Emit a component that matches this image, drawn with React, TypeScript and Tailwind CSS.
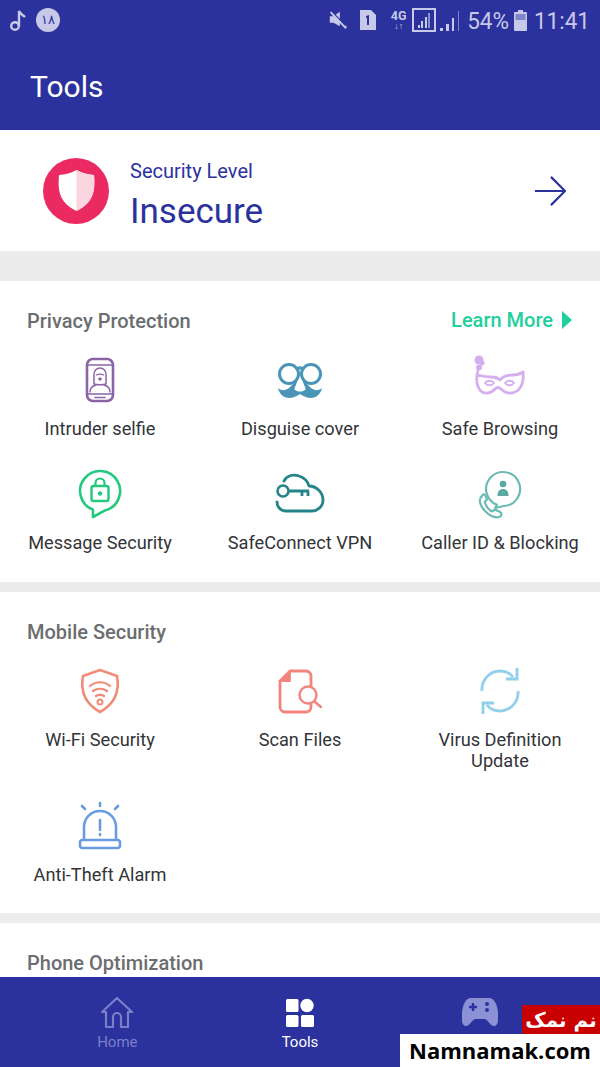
import React from "react";

function Svg({ children, color }: { children: React.ReactNode; color: string }) {
  return (
    <svg width="60" height="50" viewBox="0 0 60 50" fill="none" stroke={color} strokeWidth="2.4" strokeLinecap="round" strokeLinejoin="round">
      {children}
    </svg>
  );
}

const IntruderIcon = () => (
  <Svg color="#8a63a8">
    <rect x="17" y="4" width="26" height="42" rx="6" strokeWidth="2.6" />
    <path d="M17 10h26M17 39h26" strokeWidth="1.6" />
    <path d="M25 42.5h10" strokeWidth="1.6" />
    <path d="M24 29v-10a6 6 0 0 1 12 0v10M24 29c2 1 10 1 12 0M20 37c0-4 2-6 6-7M40 37c0-4-2-6-6-7" strokeWidth="1.5" />
    <path d="M26.500 20c2-1 5-1 7 0" strokeWidth="1.3" />
    <circle cx="30" cy="24" r="1.3" fill="#8a63a8" strokeWidth="0.8" />
  </Svg>
);
const DisguiseIcon = () => (
  <Svg color="#4a94b8">
    <circle cx="19" cy="19" r="9.5" strokeWidth="3" />
    <circle cx="41" cy="19" r="9.5" strokeWidth="3" />
    <path d="M27 14c2-1.500 4-1.500 6 0" strokeWidth="3" />
    <path d="M8 33C11 36 16 36 20 32L25 27h10l5 5C44 36 49 36 52 33 51 39 46 43 41 43 37 43 33 41 30 39 27 41 23 43 19 43 14 43 9 39 8 33z" fill="#4a94b8" stroke="none" />
    <path d="M27 26h6l3 8c-2 2-4 2.500-6 2.500s-4-.5-6-2.500z" fill="#fff" stroke="none" />
    <path d="M26.500 25l-3.500 9M33.500 25l3.500 9" strokeWidth="2.200" />
  </Svg>
);
const MaskIcon = () => (
  <Svg color="#d5aef0">
    <path d="M7 20c5 1 10 2 14 2 4 0 7 1 9 3 3-4 8-5 13-5 4 0 7-1 10-3 1 8-1 17-8 20-5 2-10 1-14-3-2-2-4-2-6 0-4 4-9 5-13 3C8 34 6 28 7 20z" strokeWidth="2.800" />
    <path d="M15 28c2-3 7-3 9 0-2 3-7 3-9 0zM35 28c2-3 7-3 9 0-2 3-7 3-9 0z" strokeWidth="1.800" />
    <circle cx="9" cy="5" r="4.500" fill="#d5aef0" stroke="none" />
    <circle cx="12" cy="8" r="2.500" fill="#d5aef0" stroke="none" />
    <circle cx="9" cy="12.500" r="3" fill="#d5aef0" stroke="none" />
    <path d="M8 15c-1 2-1 3 0 5" />
  </Svg>
);
const MessageIcon = () => (
  <Svg color="#22c97e">
    <path d="M23 40.700A20 20 0 1 1 35 41.400L23 48z" strokeWidth="2.600" />
    <rect x="21.500" y="17" width="17" height="15" rx="2" strokeWidth="2.400" />
    <path d="M25.500 17v-3a4.500 4.500 0 0 1 9 0v3" strokeWidth="2.200" />
    <circle cx="30" cy="24.500" r="2.200" fill="#22c97e" stroke="none" />
  </Svg>
);
const VpnIcon = () => (
  <Svg color="#23848a">
    <path d="M14 12C17 6 24 5 29 7 35 9 38 13 39 17 46 17 53 23 53 31 53 38 47 42 42 42H16C10 42 7 37 7 33" strokeWidth="2.800" />
    <circle cx="13" cy="22" r="5.500" strokeWidth="2.600" />
    <path d="M19 22H39M32 22v5M38 22v5" strokeWidth="2.800" strokeLinecap="butt" />
  </Svg>
);
const CallerIcon = () => (
  <Svg color="#6dbab5">
    <path d="M27 35.900A17 17 0 1 1 34 37L25 39z" strokeWidth="2.200" />
    <circle cx="33" cy="15" r="3.300" fill="#5aa8a4" stroke="none" />
    <path d="M27.500 27c0-5 2-7 5.500-7s5.500 2 5.500 7z" fill="#5aa8a4" stroke="none" />
    <g transform="translate(3 1)">
      <path d="M9 26c-4 3-2 10 3 15 5 5 10 7 14 6 3-1 3-4 1-5l-4-2c-2-1-3 2-5 1-3-2-5-5-6-8-1-2 2-2 2-4l-2-4c-1-1-2-1-3 1z" strokeWidth="2.200" />
    </g>
  </Svg>
);
const WifiIcon = () => (
  <Svg color="#f28b78">
    <path d="M30 4l17 6c2 11 1 26-17 36C12 36 11 21 13 10z" strokeWidth="2.600" />
    <path d="M20 20c6-5 14-5 20 0M23 25c4-3 10-3 14 0M26 30c2-1.500 6-1.500 8 0" strokeWidth="2.200" />
    <circle cx="30" cy="36" r="2.500" strokeWidth="2" />
  </Svg>
);
const ScanIcon = () => (
  <Svg color="#f2847e">
    <path d="M20 5h16a5 5 0 0 1 5 5v31a5 5 0 0 1-5 5H15a5 5 0 0 1-5-5V15z" strokeWidth="2.800" />
    <path d="M20 7v8H12z" fill="#f2847e" strokeWidth="1.800" />
    <circle cx="38" cy="29" r="8.500" fill="#fff" strokeWidth="2.400" />
    <path d="M44.500 35.500L51 41" strokeWidth="2.400" />
  </Svg>
);
const SyncIcon = () => (
  <Svg color="#8fd0ea">
    <path d="M12 25C11 14 20 5 30 5c6 0 10 2 13 6M48 25c1 11-8 20-18 20-6 0-10-2-13-6" strokeWidth="2.800" strokeLinecap="butt" />
    <path d="M47 2v11H36M13 48V37h11" strokeWidth="2.800" strokeLinecap="butt" strokeLinejoin="miter" />
  </Svg>
);
const AlarmIcon = () => (
  <Svg color="#6a9be0">
    <rect x="10" y="39" width="40" height="8" rx="2.500" strokeWidth="2.600" />
    <path d="M14 39V26a16 16 0 0 1 32 0v13" strokeWidth="2.600" />
    <path d="M30 19v10M30 33v1" strokeWidth="2.600" />
    <path d="M30 2v3M12 5l3 3M48 5l-3 3" strokeWidth="2.600" />
  </Svg>
);

function Tile({ icon, label }: { icon: React.ReactNode; label: React.ReactNode }) {
  return (
    <div className="flex flex-col items-center text-center">
      <div className="h-[50px] flex items-center justify-center">{icon}</div>
      <div className="mt-[13px] text-[18.2px] leading-[21px] text-[#333438]">{label}</div>
    </div>
  );
}

function Section({ title, extra, children, pb }: { title: string; extra?: React.ReactNode; children?: React.ReactNode; pb: string }) {
  return (
    <section className={"bg-white pt-[28px] " + pb}>
      <div className="h-[24px] pl-[27px] pr-[28px] flex items-center justify-between">
        <h2 className="text-[20px] font-medium text-[#6b6d70]">{title}</h2>
        {extra}
      </div>
      {children && <div className="mt-[22px] grid grid-cols-3 gap-y-[30px]">{children}</div>}
    </section>
  );
}

function StatusBar() {
  return (
    <div className="h-[40px] pl-[9px] pr-[10px] flex items-center justify-between text-[#c6c9e8]">
      <div className="flex items-center gap-[9px]">
        <svg width="18" height="24" viewBox="0 0 18 24" fill="none" stroke="#c6c9e8" strokeWidth="2.400">
          <circle cx="6" cy="18" r="3.800" />
          <path d="M10 18V3c1 3 4 4 6 6" />
        </svg>
        <div className="w-[24px] h-[24px] rounded-full bg-[#c6c9e8] flex items-center justify-center text-[#2c329d] text-[13px] font-medium">۱۸</div>
      </div>
      <div className="flex items-center">
        <svg width="20" height="24" viewBox="0 0 22 24" fill="#c6c9e8" stroke="none">
          <path d="M2 8h4l7-5v16l-7-4H2z" />
          <path d="M3 3l17 18" stroke="#c6c9e8" strokeWidth="2.600" />
          <path d="M2 0l17 18" stroke="#2c329d" strokeWidth="1.200" />
        </svg>
        <svg width="18" height="22" viewBox="0 0 18 22" className="ml-[11px]">
          <path d="M1 1h11l5 5v15H1z" fill="#c6c9e8" />
          <path d="M7 7l3-1v10H8V8.500L7 9z" fill="#2c329d" />
        </svg>
        <div className="ml-[13px] w-[17px] text-[12.5px] leading-[12px] font-bold text-center">
          4G
          <div className="text-[9px] leading-[9px]">↓↑</div>
        </div>
        <div className="ml-[5px] w-[24px] h-[24px] border-2 border-[#c6c9e8] flex items-end justify-center gap-[1.500px] pb-[2px]">
          <i className="block w-[2px] h-[3px] bg-[#c6c9e8]" />
          <i className="block w-[2px] h-[7px] bg-[#c6c9e8]" />
          <i className="block w-[2px] h-[11px] bg-[#c6c9e8]" />
          <i className="block w-[2px] h-[15px] bg-[#8a8fd0]" />
        </div>
        <div className="ml-[4px] w-[19px] h-[22px] flex items-end justify-between">
          <i className="block w-[2.500px] h-[3px] bg-[#c6c9e8]" />
          <i className="block w-[2.500px] h-[7px] bg-[#c6c9e8]" />
          <i className="block w-[2.500px] h-[13px] bg-[#c6c9e8]" />
          <i className="block w-[1.500px] h-[20px] bg-[#7f85cb]" />
        </div>
        <span className="ml-[8px] text-[22.5px] leading-none scale-y-110">54%</span>
        <svg width="13" height="21" viewBox="0 0 13 21" className="ml-[5px]">
          <rect x="4" y="0" width="5" height="3" fill="#c6c9e8" />
          <rect x="0" y="2" width="13" height="19" rx="1" fill="#c6c9e8" />
          <rect x="1.500" y="4" width="10" height="6" fill="#7f85cb" />
        </svg>
        <span className="ml-[7px] text-[22.5px] leading-none scale-y-110">11:41</span>
      </div>
    </div>
  );
}

export default function App() {
  return (
    <div className="relative w-[600px] h-[1067px] overflow-hidden flex flex-col bg-[#ececec] [font-family:Roboto,'Liberation_Sans',sans-serif]">
      <header className="h-[130px] bg-[#2c329d] shrink-0">
        <StatusBar />
        <div className="pl-[30px] mt-[26px] h-[40px] flex items-center text-white text-[30px]">Tools</div>
      </header>

      <main className="flex-1 min-h-0 overflow-hidden">
        <div className="h-[121px] bg-white pl-[43px] pr-[34px] flex items-center">
          <div className="w-[66px] h-[66px] rounded-full bg-[#ea2a61] flex items-center justify-center">
            <svg width="37" height="43" viewBox="0 0 38 44">
              <path d="M19 1c5 3 12 5 18 5 1 14 1 28-18 37C0 34 0 20 1 6c6 0 13-2 18-5z" fill="#fff" />
              <path d="M19 1c5 3 12 5 18 5 1 14 1 28-18 37z" fill="#fbd5df" />
            </svg>
          </div>
          <div className="ml-[21px] pt-[12px] flex-1 text-[#2c329d]">
            <div className="text-[20px] leading-[24px]">Security Level</div>
            <div className="mt-[7px] text-[35px] leading-[44px]">Insecure</div>
          </div>
          <svg width="32" height="32" viewBox="0 0 34 34" fill="none" stroke="#2c329d" strokeWidth="2.300">
            <path d="M1 17h31M18 2l15 15-15 15" />
          </svg>
        </div>

        <div className="mt-[30px]">
          <Section
            pb="pb-[29px]"
            title="Privacy Protection"
            extra={
              <div className="mb-[2px] flex items-center text-[#1fcf9c] text-[20px] font-medium">
                Learn More
                <svg width="10" height="18" viewBox="0 0 10 18" className="ml-[9px]"><path d="M0 0l10 9-10 9z" fill="#1fcf9c" /></svg>
              </div>
            }
          >
            <Tile icon={<IntruderIcon />} label="Intruder selfie" />
            <Tile icon={<DisguiseIcon />} label="Disguise cover" />
            <Tile icon={<MaskIcon />} label="Safe Browsing" />
            <Tile icon={<MessageIcon />} label="Message Security" />
            <Tile icon={<VpnIcon />} label="SafeConnect VPN" />
            <Tile icon={<CallerIcon />} label="Caller ID & Blocking" />
          </Section>
        </div>

        <div className="mt-[10px]">
          <Section pb="pb-[28px]" title="Mobile Security">
            <Tile icon={<WifiIcon />} label="Wi-Fi Security" />
            <Tile icon={<ScanIcon />} label="Scan Files" />
            <Tile icon={<SyncIcon />} label={<>Virus Definition<br />Update</>} />
            <Tile icon={<AlarmIcon />} label="Anti-Theft Alarm" />
          </Section>
        </div>

        <div className="mt-[10px]">
          <Section pb="pb-[28px]" title="Phone Optimization" />
        </div>
      </main>

      <nav className="h-[90px] shrink-0 bg-[#2c329d] grid grid-cols-3 px-[26px] pt-[20px]">
        <div className="flex flex-col items-center text-[#7a7fc9] text-[15px]">
          <svg width="34" height="32" viewBox="0 0 34 32" fill="none" stroke="#7a7fc9" strokeWidth="2.200" strokeLinejoin="round">
            <path d="M2 15L17 1l15 14h-4v15h-7V20a4 4 0 0 0-8 0v10H6V15z" />
          </svg>
          <span className="mt-[4px] leading-[18px]">Home</span>
        </div>
        <div className="flex flex-col items-center text-white text-[15px]">
          <svg width="28" height="30" viewBox="0 0 28 30" fill="#fff" className="mt-[1px]">
            <rect x="0" y="1" width="12.500" height="13" rx="1.500" />
            <circle cx="21" cy="7.500" r="6.700" />
            <rect x="0" y="17" width="12.500" height="12" rx="1.500" />
            <rect x="15" y="17" width="13" height="12" rx="1.500" />
          </svg>
          <span className="mt-[5px] leading-[18px]">Tools</span>
        </div>
        <div className="flex flex-col items-center">
          <svg width="36" height="30" viewBox="0 0 36 30" className="mr-[5px]">
            <path d="M9 1h18c5 0 8 6 9 14 1 8 0 14-4 14s-6-7-10-7h-8c-4 0-6 7-10 7s-5-6-4-14C1 7 4 1 9 1z" fill="#8c90d4" />
            <path d="M11 6v8M7 10h8" stroke="#2c329d" strokeWidth="2.400" />
            <circle cx="25" cy="7" r="2" fill="#2c329d" />
            <circle cx="25" cy="13" r="2" fill="#2c329d" />
          </svg>
        </div>
      </nav>

      <div className="absolute right-0 bottom-[33px] w-[78px] h-[29px] bg-[#c80000] text-white text-[20px] font-bold flex items-center justify-center [font-family:'DejaVu_Sans',sans-serif]" dir="rtl">نم نمک</div>
      <div className="absolute right-0 bottom-0 w-[200px] h-[33px] bg-white text-black text-[22px] font-bold flex items-center justify-center [font-family:'Open_Sans',sans-serif]">Namnamak.com</div>
    </div>
  );
}
